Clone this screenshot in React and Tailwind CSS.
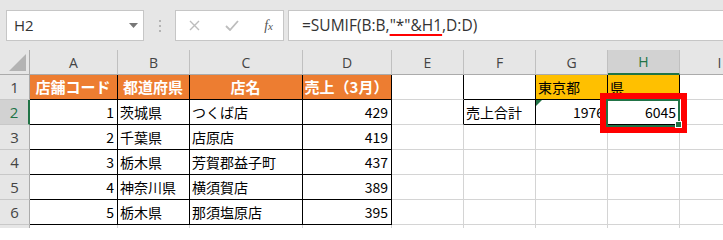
import React from 'react';
import clsx from 'clsx';

const W = ['w-[30px]', 'w-[88px]', 'w-[72px]', 'w-[113px]', 'w-[89px]', 'w-[72px]', 'w-[72px]', 'w-[72px]', 'w-[72px]', 'w-[80px]'];
const LETTERS = ['A', 'B', 'C', 'D', 'E', 'F', 'G', 'H', 'I'];

function Cell({ i, r, b, className, children }) {
  return (
    <div
      className={clsx(
        'relative shrink-0 h-[25px] border-r border-b flex items-center pl-[2px] pr-[3px] overflow-hidden whitespace-nowrap',
        W[i],
        r ? 'border-r-black' : 'border-r-[#d4d4d4]',
        b ? 'border-b-black' : 'border-b-[#d4d4d4]',
        className
      )}
    >
      {children}
    </div>
  );
}

function RowHead({ n, active }) {
  return (
    <div
      className={clsx(
        'shrink-0 w-[30px] h-[25px] flex items-center justify-center border-b border-b-[#c8c8c8] text-[15px] font-["Open_Sans",sans-serif]',
        active
          ? 'bg-[#d2d2d2] text-[#217346] border-r-2 border-r-[#217346]'
          : 'bg-[#e6e6e6] text-[#444] border-r border-r-[#ababab]'
      )}
    >
      {n}
    </div>
  );
}

const rows = [
  ['1', '茨城県', 'つくば店', '429'],
  ['2', '千葉県', '店原店', '419'],
  ['3', '栃木県', '芳賀郡益子町', '437'],
  ['4', '神奈川県', '横須賀店', '389'],
  ['5', '栃木県', '那須塩原店', '395'],
];

export default function App() {
  return (
    <div className="w-[723px] h-[228px] overflow-hidden bg-white relative font-['Noto_Sans_CJK_JP',sans-serif] text-[14px] text-black">
      {/* toolbar */}
      <div className="h-[50px] bg-[#e6e6e6] flex items-start pt-[10px] pl-[6px] overflow-hidden">
        <div className="w-[138px] h-[31px] shrink-0 bg-white border border-[#c6c6c6] flex items-center pl-[7px] pr-[5px] justify-between">
          <span className="text-[15px] text-[#333] font-['Open_Sans',sans-serif]">H2</span>
          <svg width="9" height="5" viewBox="0 0 9 5"><path d="M0 0h9L4.5 5z" fill="#777" /></svg>
        </div>
        <div className="w-[31px] h-[31px] shrink-0 flex flex-col items-center justify-center gap-[3px]">
          <div className="w-[2px] h-[2px] bg-[#b4b4b4]" />
          <div className="w-[2px] h-[2px] bg-[#b4b4b4]" />
          <div className="w-[2px] h-[2px] bg-[#b4b4b4]" />
        </div>
        <div className="w-[109px] h-[31px] shrink-0 bg-white border border-[#c6c6c6] flex items-center pl-[13px] pr-[10px] justify-between">
          <svg width="11" height="11" viewBox="0 0 11 11"><path d="M1 1l9 9M10 1l-9 9" stroke="#bdbdbd" strokeWidth="1.4" /></svg>
          <svg width="14" height="11" viewBox="0 0 14 11"><path d="M1 6l4 4 8-9" stroke="#bdbdbd" strokeWidth="1.8" fill="none" /></svg>
          <span className="font-['Liberation_Serif',serif] italic text-[14px] text-[#555] leading-none">f<span className="text-[11px]">x</span></span>
        </div>
        <div className="ml-[4px] w-[460px] h-[31px] shrink-0 bg-white border border-[#c6c6c6] flex items-center pl-[13px] text-[15.5px] text-[#333] font-['Open_Sans',sans-serif]">
          <span className="whitespace-pre">
            =SUMIF(B:B,
            <span className="underline decoration-[#ff0000] decoration-[2px] underline-offset-[3px]">"*"&amp;H1</span>
            ,D:D)
          </span>
        </div>
      </div>

      {/* column headers */}
      <div className="flex h-[25px] bg-[#e6e6e6] font-['Open_Sans',sans-serif] text-[14px] text-[#444]">
        <div className="shrink-0 w-[30px] h-[25px] border-r border-b border-r-[#ababab] border-b-[#ababab] flex items-end justify-end pr-[3px] pb-[3px]">
          <svg width="17" height="17" viewBox="0 0 17 17"><path d="M17 0V17H0z" fill="#b3b3b3" /></svg>
        </div>
        {LETTERS.map((L, k) => (
          <div
            key={L}
            className={clsx(
              'shrink-0 h-[25px] flex items-center justify-center border-r border-r-[#c0c0c0]',
              W[k + 1],
              L === 'H'
                ? 'bg-[#d2d2d2] text-[#217346] border-b-2 border-b-[#217346]'
                : 'border-b border-b-[#ababab]'
            )}
          >
            {L}
          </div>
        ))}
      </div>

      {/* row 1 */}
      <div className="flex">
        <RowHead n="1" />
        <Cell i={1} r b className="bg-[#ed7d31] text-white font-bold text-[15px] justify-center">店舗コード</Cell>
        <Cell i={2} r b className="bg-[#ed7d31] text-white font-bold text-[15px] justify-center">都道府県</Cell>
        <Cell i={3} r b className="bg-[#ed7d31] text-white font-bold text-[15px] justify-center">店名</Cell>
        <Cell i={4} r b className="bg-[#ed7d31] text-white font-bold text-[15px] justify-center">売上（3月）</Cell>
        <Cell i={5} r />
        <Cell i={6} r b />
        <Cell i={7} r b className="bg-[#ffc000]">東京都</Cell>
        <Cell i={8} r b className="bg-[#ffc000]">県</Cell>
        <Cell i={9} />
      </div>

      {rows.map((row, idx) => (
        <div className="flex" key={idx}>
          <RowHead n={String(idx + 2)} active={idx === 0} />
          <Cell i={1} r b className="justify-end">{row[0]}</Cell>
          <Cell i={2} r b>{row[1]}</Cell>
          <Cell i={3} r b>{row[2]}</Cell>
          <Cell i={4} r b className="justify-end">{row[3]}</Cell>
          <Cell i={5} r={idx === 0} />
          {idx === 0 ? (
            <>
              <Cell i={6} r b>売上合計</Cell>
              <Cell i={7} r b className="justify-end">
                <span className="absolute left-0 top-0 w-0 h-0 border-t-[6px] border-t-[#217346] border-r-[6px] border-r-transparent" />
                1976
              </Cell>
              <Cell i={8} r b className="justify-end">6045</Cell>
            </>
          ) : (
            <>
              <Cell i={6} />
              <Cell i={7} />
              <Cell i={8} />
            </>
          )}
          <Cell i={9} />
        </div>
      ))}

      <div className="flex">
        <RowHead n="" />
        <Cell i={1} />
        <Cell i={2} />
        <Cell i={3} />
        <Cell i={4} />
        <Cell i={5} />
        <Cell i={6} />
        <Cell i={7} />
        <Cell i={8} />
        <Cell i={9} />
      </div>

      {/* selection + highlight overlays */}
      <div className="absolute left-[600px] top-[93px] w-[87px] h-[40px] border-[6px] border-[#ff0000]" />
      <div className="absolute left-[606px] top-[99px] w-[74px] h-[28px] border-2 border-[#217346]" />
      <div className="absolute left-[675px] top-[121px] w-[7px] h-[7px] bg-[#217346] border border-white" />
    </div>
  );
}
